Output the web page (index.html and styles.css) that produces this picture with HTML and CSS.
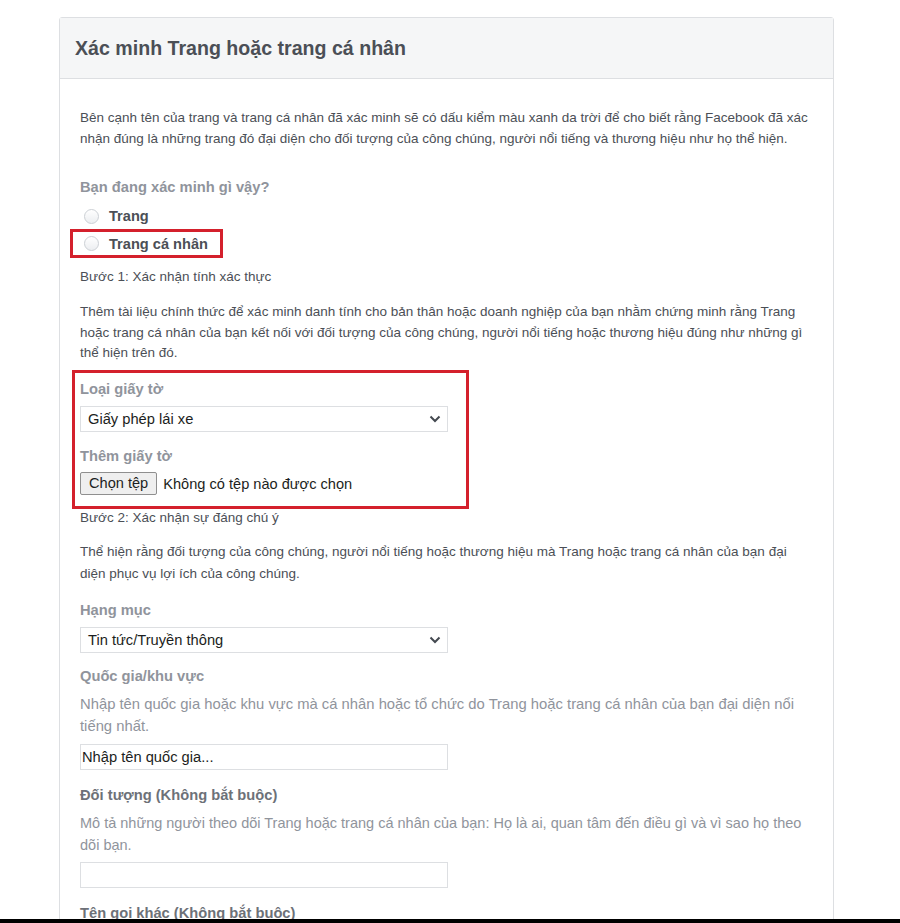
FILE: index.html
```html
<!DOCTYPE html>
<html lang="vi">
<head>
<meta charset="utf-8">
<title>Xác minh Trang hoặc trang cá nhân</title>
<link rel="stylesheet" href="styles.css">
</head>
<body>
<div class="card">
  <div class="card-header">
    <h1 class="title">Xác minh Trang hoặc trang cá nhân</h1>
  </div>
  <div class="card-body">
    <p class="text p1">Bên cạnh tên của trang và trang cá nhân đã xác minh sẽ có dấu kiểm màu xanh da trời để cho biết rằng Facebook đã xác nhận đúng là những trang đó đại diện cho đối tượng của công chúng, người nổi tiếng và thương hiệu như họ thể hiện.</p>

    <div class="label q">Bạn đang xác minh gì vậy?</div>
    <div class="radios">
      <label class="radio-row"><span class="radio"></span><span class="radio-text">Trang</span></label>
      <label class="radio-row marked"><span class="radio"></span><span class="radio-text">Trang cá nhân</span></label>
    </div>

    <div class="step step1">Bước 1: Xác nhận tính xác thực</div>
    <p class="text p2">Thêm tài liệu chính thức để xác minh danh tính cho bản thân hoặc doanh nghiệp của bạn nhằm chứng minh rằng Trang hoặc trang cá nhân của bạn kết nối với đối tượng của công chúng, người nổi tiếng hoặc thương hiệu đúng như những gì thể hiện trên đó.</p>

    <div class="doc-box">
      <div class="label doc-label">Loại giấy tờ</div>
      <div class="select sel1">
        <span class="select-text">Giấy phép lái xe</span>
        <svg class="chev" width="12" height="8" viewBox="0 0 12 8"><path d="M1.5 1.5 L6 6 L10.5 1.5" fill="none" stroke="#444950" stroke-width="2"/></svg>
      </div>
      <div class="label add-label">Thêm giấy tờ</div>
      <div class="file-row">
        <span class="file-btn">Chọn tệp</span>
        <span class="file-text">Không có tệp nào được chọn</span>
      </div>
    </div>

    <div class="step step2">Bước 2: Xác nhận sự đáng chú ý</div>
    <p class="text p3">Thể hiện rằng đối tượng của công chúng, người nổi tiếng hoặc thương hiệu mà Trang hoặc trang cá nhân của bạn đại diện phục vụ lợi ích của công chúng.</p>

    <div class="label l-cat">Hạng mục</div>
    <div class="select sel2">
      <span class="select-text">Tin tức/Truyền thông</span>
      <svg class="chev" width="12" height="8" viewBox="0 0 12 8"><path d="M1.5 1.5 L6 6 L10.5 1.5" fill="none" stroke="#444950" stroke-width="2"/></svg>
    </div>

    <div class="label l-country">Quốc gia/khu vực</div>
    <p class="desc">Nhập tên quốc gia hoặc khu vực mà cá nhân hoặc tổ chức do Trang hoặc trang cá nhân của bạn đại diện nổi tiếng nhất.</p>
    <div class="input in1"><span class="input-text">Nhập tên quốc gia...</span></div>

    <div class="label dark l-aud">Đối tượng (Không bắt buộc)</div>
    <p class="desc desc-narrow">Mô tả những người theo dõi Trang hoặc trang cá nhân của bạn: Họ là ai, quan tâm đến điều gì và vì sao họ theo dõi bạn.</p>
    <div class="input in2"></div>

    <div class="label dark l-alias">Tên gọi khác (Không bắt buộc)</div>
  </div>
</div>
<div class="bottom-bar"></div>
</body>
</html>
```

FILE: styles.css
```css
html, body {
  margin: 0;
  padding: 0;
  background: #ffffff;
}
body {
  font-family: "Liberation Sans", Arial, sans-serif;
  color: #4b4f56;
  padding: 17px 0 0 59px;
  height: 923px;
  box-sizing: border-box;
  overflow: hidden;
}
.card {
  width: 775px;
  box-sizing: border-box;
  border: 1px solid #dddfe2;
  border-radius: 3px 3px 0 0;
  background: #fff;
}
.card-header {
  background: #f5f6f7;
  border-bottom: 1px solid #dddfe2;
  height: 60px;
  display: flex;
  align-items: center;
  padding: 0 15px;
}
.title {
  margin: 0;
  font-size: 19.6px;
  font-weight: bold;
  color: #4b4f56;
}
.card-body {
  padding: 28px 20px 0 20px;
}
.text {
  margin: 0;
  font-size: 13.5px;
  line-height: 21px;
  color: #4b4f56;
}
.label {
  font-size: 14.7px;
  font-weight: bold;
  line-height: 21px;
  color: #90949c;
}
.label.dark {
  color: #6d7178;
}
.q { margin-top: 28px; }
.radios {
  display: flex;
  flex-direction: column;
  align-items: flex-start;
  margin-top: 5px;
}
.radio-row {
  display: inline-flex;
  align-items: center;
  height: 26px;
}
.radio-row.marked {
  height: 23px;
  border: 3px solid #d4202c;
  margin-left: -10px;
  padding: 0 12px 0 7px;
}
.radio {
  width: 15px;
  height: 15px;
  border-radius: 50%;
  border: 1px solid #ccd0d5;
  background: linear-gradient(#ffffff, #eceef1);
  box-sizing: border-box;
  margin-left: 4px;
  margin-right: 10px;
}
.radio-text {
  font-size: 14.6px;
  font-weight: bold;
  color: #4b4f56;
}
.step {
  font-size: 13.5px;
  line-height: 18px;
  color: #4b4f56;
}
.step1 { margin-top: 10px; }
.p2 { margin-top: 16px; line-height: 20.5px; }
.doc-box {
  margin: 6px 0 0 -8px;
  width: 397px;
  box-sizing: border-box;
  border: 3px solid #d4202c;
  padding: 6px 0 11px 5px;
}
.select {
  width: 368px;
  height: 26px;
  box-sizing: border-box;
  border: 1px solid #dddfe2;
  display: flex;
  align-items: center;
  justify-content: space-between;
  padding: 0 6px 0 7px;
  background: #fff;
}
.sel1 { margin-top: 6.5px; }
.select-text {
  font-size: 14.7px;
  color: #1c1e21;
}
.chev { display: block; }
.add-label { margin-top: 13.5px; }
.file-row {
  display: flex;
  align-items: center;
  margin-top: 5.5px;
}
.file-btn {
  display: inline-block;
  height: 23px;
  box-sizing: border-box;
  border: 1px solid #8f8f8f;
  border-radius: 2px;
  background: #efefef;
  font-size: 14.6px;
  line-height: 21px;
  padding: 0 8px;
  color: #1c1e21;
}
.file-text {
  font-size: 14.6px;
  color: #1c1e21;
  margin-left: 6px;
}
.step2 { margin-top: 0; }
.p3 { margin-top: 14px; line-height: 22px; }
.l-cat { margin-top: 14.5px; }
.sel2 { margin-top: 6.5px; }
.l-country { margin-top: 12.5px; }
.desc {
  margin: 6.5px 0 0 0;
  font-size: 14.8px;
  line-height: 22px;
  color: #90949c;
}
.desc-narrow {
  font-size: 14.5px;
}
.input {
  width: 368px;
  height: 26px;
  box-sizing: border-box;
  border: 1px solid #dddfe2;
  display: flex;
  align-items: center;
  padding: 0 1px;
}
.in1 { margin-top: 7px; }
.in2 { margin-top: 6px; }
.input-text {
  font-size: 14.7px;
  color: #1c1e21;
}
.l-aud { margin-top: 14.5px; }
.l-alias { margin-top: 14.5px; }
.bottom-bar {
  position: fixed;
  left: 0;
  right: 0;
  bottom: 0;
  height: 4px;
  background: #000;
}
```
